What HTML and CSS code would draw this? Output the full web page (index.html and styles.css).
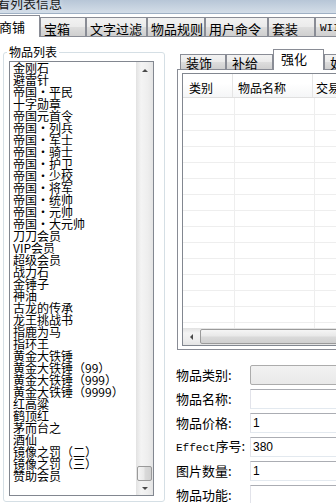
FILE: index.html
```html
<!DOCTYPE html>
<html lang="zh-CN">
<head>
    <meta charset="UTF-8">
    <meta name="viewport" content="width=device-width, initial-scale=1.0">
    <title>查看列表信息</title>
    <link rel="stylesheet" href="styles.css">
</head>
<body>
<div class="window">
    <div class="titlebar"><span class="title">看列表信息</span></div>

    <div class="main-tabs">
        <div class="tab active w45">商铺</div>
        <div class="tab w46">宝箱</div>
        <div class="tab w61">文字过滤</div>
        <div class="tab w58">物品规则</div>
        <div class="tab w63">用户命令</div>
        <div class="tab w47">套装</div>
        <div class="tab w60 latin">WIIS</div>
    </div>

    <div class="main-page">
        <!-- left: item list -->
        <fieldset class="group">
            <legend>物品列表</legend>
            <div class="listbox">
                <ul class="items">
                    <li>金刚石</li>
                    <li>避雷针</li>
                    <li>帝国<span class="dot">·</span>平民</li>
                    <li>十字勋章</li>
                    <li>帝国元首令</li>
                    <li>帝国<span class="dot">·</span>列兵</li>
                    <li>帝国<span class="dot">·</span>军士</li>
                    <li>帝国<span class="dot">·</span>骑士</li>
                    <li>帝国<span class="dot">·</span>护卫</li>
                    <li>帝国<span class="dot">·</span>少校</li>
                    <li>帝国<span class="dot">·</span>将军</li>
                    <li>帝国<span class="dot">·</span>统帅</li>
                    <li>帝国<span class="dot">·</span>元帅</li>
                    <li>帝国<span class="dot">·</span>大元帅</li>
                    <li>刀刀会员</li>
                    <li>VIP会员</li>
                    <li>超级会员</li>
                    <li>战力石</li>
                    <li>金锤子</li>
                    <li>神油</li>
                    <li>古龙的传承</li>
                    <li>龙王挑战书</li>
                    <li>指鹿为马</li>
                    <li>指环王</li>
                    <li>黄金大铁锤</li>
                    <li>黄金大铁锤（99）</li>
                    <li>黄金大铁锤（999）</li>
                    <li>黄金大铁锤（9999）</li>
                    <li>红高粱</li>
                    <li>鹤顶红</li>
                    <li>茅而台之</li>
                    <li>酒仙</li>
                    <li>镜像之罚（二）</li>
                    <li>镜像之罚（三）</li>
                    <li>赞助会员</li>
                </ul>
                <div class="vscroll">
                    <div class="arrow up"></div>
                    <div class="track"><div class="thumb"></div></div>
                    <div class="arrow down"></div>
                </div>
            </div>
        </fieldset>

        <!-- right: detail -->
        <div class="detail">
            <div class="sub-tabs">
                <div class="sub-tab w46">装饰</div>
                <div class="sub-tab w47">补给</div>
                <div class="sub-tab active w51">强化</div>
                <div class="sub-tab w40">如意</div>
            </div>
            <div class="sub-page">
                <div class="listview">
                    <div class="lv-head">
                        <span class="c1">类别</span>
                        <span class="c2">物品名称</span>
                        <span class="c3">交易类型</span>
                    </div>
                    <div class="lv-body"></div>
                    <div class="hscroll">
                        <div class="h-arrow"></div>
                        <div class="h-thumb"></div>
                    </div>
                </div>
            </div>

            <div class="form">
                <div class="field">
                    <label>物品类别:</label>
                    <input type="text" class="combo" readonly>
                </div>
                <div class="field">
                    <label>物品名称:</label>
                    <input type="text" value="">
                </div>
                <div class="field">
                    <label>物品价格:</label>
                    <input type="text" value="1">
                </div>
                <div class="field">
                    <label><span class="mono">Effect</span>序号:</label>
                    <input type="text" value="380">
                </div>
                <div class="field">
                    <label>图片数量:</label>
                    <input type="text" value="1">
                </div>
                <div class="field">
                    <label>物品功能:</label>
                    <input type="text" value="">
                </div>
            </div>
        </div>
    </div>
</div>
</body>
</html>
```

FILE: styles.css
```css
* {
    box-sizing: border-box;
}

body {
    margin: 0;
    width: 336px;
    height: 503px;
    overflow: hidden;
    background: #fff;
    font-family: "Noto Sans CJK SC", sans-serif;
    font-size: 12px;
    color: #000;
}

.window {
    width: 420px;
}

/* window frame */
.titlebar {
    height: 14px;
    overflow: hidden;
    background: linear-gradient(180deg, #b7c6d7 0%, #c8d4e1 60%, #d3dde8 100%);
    border-bottom: 1px solid #9fb0c4;
}

.title {
    display: block;
    margin: -4px 0 0 -3px;
    font-size: 13px;
    line-height: 13px;
    color: #1a1a1a;
    text-shadow: 0 0 4px #e6edf5;
}

/* top tab strip */
.main-tabs {
    display: flex;
    align-items: flex-end;
    height: 23px;
    border-bottom: 1px solid #898c95;
}

.tab {
    flex: none;
    height: 19px;
    padding: 4px 0 0 3px;
    border: 1px solid #898c95;
    border-bottom: none;
    background: linear-gradient(#f2f2f2, #ebebeb 48%, #dddddd 52%, #cfcfcf);
    font-size: 13px;
    line-height: 13px;
    white-space: nowrap;
}

.tab.active {
    height: 22px;
    margin-left: -5px;
    margin-bottom: -1px;
    background: #fff;
}

.tab.latin {
    font-family: "Liberation Mono", monospace;
    font-size: 11px;
    padding-left: 4px;
}

.w40 { width: 40px; }
.w45 { width: 45px; }
.w46 { width: 46px; }
.w47 { width: 47px; }
.w51 { width: 51px; }
.w58 { width: 58px; }
.w60 { width: 60px; }
.w61 { width: 61px; }
.w63 { width: 63px; }

.main-page {
    display: flex;
    align-items: flex-start;
}

/* group box with list */
.group {
    flex: none;
    width: 162px;
    min-width: 0;
    margin: 9px 0 0 3px;
    padding: 0 5px 5px;
    border: 1px solid #d5dfe5;
    border-radius: 3px;
}

.group legend {
    margin-left: -2px;
    padding: 0 2px;
    font-size: 12px;
    line-height: 12px;
}

.listbox {
    display: flex;
    width: 145px;
    height: 435px;
    margin-top: 3px;
    border: 1px solid #828790;
    background: #fff;
}

.items {
    flex: 1;
    margin: 0;
    padding: 0 0 0 3px;
    list-style: none;
    overflow: hidden;
    font-size: 12px;
    line-height: 12px;
    white-space: nowrap;
}

.dot {
    display: inline-block;
    width: 12px;
    text-align: center;
}

.vscroll {
    flex: none;
    width: 17px;
    display: flex;
    flex-direction: column;
    background: linear-gradient(to right, #e2e2e2, #f4f4f4 30%, #eeeeee 70%, #e4e4e4);
}

.arrow {
    flex: none;
    height: 17px;
    display: flex;
    align-items: center;
    justify-content: center;
}

.arrow::before {
    content: "";
    border-left: 3px solid transparent;
    border-right: 3px solid transparent;
}

.arrow.up::before {
    border-bottom: 3px solid #4a4a4a;
}

.arrow.down {
    height: 14px;
}

.arrow.down::before {
    border-top: 3px solid #4a4a4a;
}

.track {
    flex: 1;
    display: flex;
    flex-direction: column;
    justify-content: flex-end;
}

.thumb {
    height: 15px;
    margin: 0 1px;
    border: 1px solid #9a9a9a;
    border-radius: 2px;
    background: linear-gradient(to right, #f5f5f5, #e8e8e8 48%, #dadada 52%, #d0d0d0);
}

/* right column */
.detail {
    flex: 1;
    min-width: 0;
    margin-left: 12px;
}

.sub-tabs {
    display: flex;
    align-items: flex-end;
    height: 33px;
    padding-left: 3px;
    border-bottom: 1px solid #898c95;
}

.sub-tab {
    flex: none;
    height: 15px;
    padding: 2px 0 0 5px;
    border: 1px solid #898c95;
    border-bottom: none;
    background: linear-gradient(#f2f2f2, #ebebeb 48%, #dddddd 52%, #cfcfcf);
    font-size: 13px;
    line-height: 12px;
    white-space: nowrap;
}

.sub-tab.active {
    height: 21px;
    margin-bottom: -1px;
    padding: 3px 0 0 7px;
    background: #fff;
}

.sub-page {
    height: 280px;
    padding: 3px 0 3px 4px;
    border: 1px solid #898c95;
    border-top: none;
    background: #fff;
}

.listview {
    height: 273px;
    display: flex;
    flex-direction: column;
    border: 1px solid #828790;
    background: #fff;
}

.lv-head {
    flex: none;
    display: flex;
    height: 24px;
    border-bottom: 1px solid #e0e0e0;
    background: linear-gradient(#fff, #fff 40%, #f5f6f7);
}

.lv-head span {
    flex: none;
    padding: 6px 0 0 5px;
    line-height: 16px;
    border-right: 1px solid #e5e5e5;
    white-space: nowrap;
}

.lv-head .c1 {
    width: 50px;
    padding-left: 6px;
}

.lv-head .c2 {
    width: 80px;
}

.lv-head .c3 {
    width: 100px;
    padding-left: 3px;
}

.lv-body {
    flex: 1;
    background:
        linear-gradient(to right, transparent 51px, #eeeeee 51px, #eeeeee 52px, transparent 52px),
        linear-gradient(to right, transparent 131px, #eeeeee 131px, #eeeeee 132px, transparent 132px),
        repeating-linear-gradient(to bottom, transparent 0, transparent 15px, #eeeeee 15px, #eeeeee 16px);
    background-position: 0 0, 0 0, 0 1px;
}

.hscroll {
    flex: none;
    height: 17px;
    display: flex;
    background: linear-gradient(#e2e2e2, #f4f4f4 30%, #eeeeee 70%, #e4e4e4);
}

.h-arrow {
    flex: none;
    width: 17px;
    display: flex;
    align-items: center;
    justify-content: center;
}

.h-arrow::before {
    content: "";
    border-top: 3px solid transparent;
    border-bottom: 3px solid transparent;
    border-right: 3px solid #4a4a4a;
}

.h-thumb {
    flex: 1;
    margin: 1px 0;
    border: 1px solid #9a9a9a;
    border-radius: 2px;
    background: linear-gradient(#f5f5f5, #e8e8e8 48%, #dadada 52%, #d0d0d0);
}

/* form below */
.form {
    margin: 15px 0 0 -1px;
}

.field {
    display: flex;
    align-items: center;
    height: 20px;
    margin-bottom: 4px;
}

.field label {
    flex: none;
    width: 74px;
    font-size: 13px;
    line-height: 14px;
    white-space: nowrap;
}

.mono {
    font-family: "Liberation Mono", monospace;
    font-size: 11px;
}

.field input {
    flex: none;
    width: 170px;
    height: 20px;
    margin: 0;
    padding: 0 2px;
    border: 1px solid;
    border-color: #abadb3 #dbdfe6 #e3e9ef #e2e3ea;
    border-radius: 0;
    background: #fff;
    font-family: "Liberation Sans", sans-serif;
    font-size: 12px;
    color: #000;
    outline: none;
}

.field input.combo {
    border-color: #acacac;
    border-radius: 2px;
    background: linear-gradient(#f2f2f2, #e9e9e9);
}
```
